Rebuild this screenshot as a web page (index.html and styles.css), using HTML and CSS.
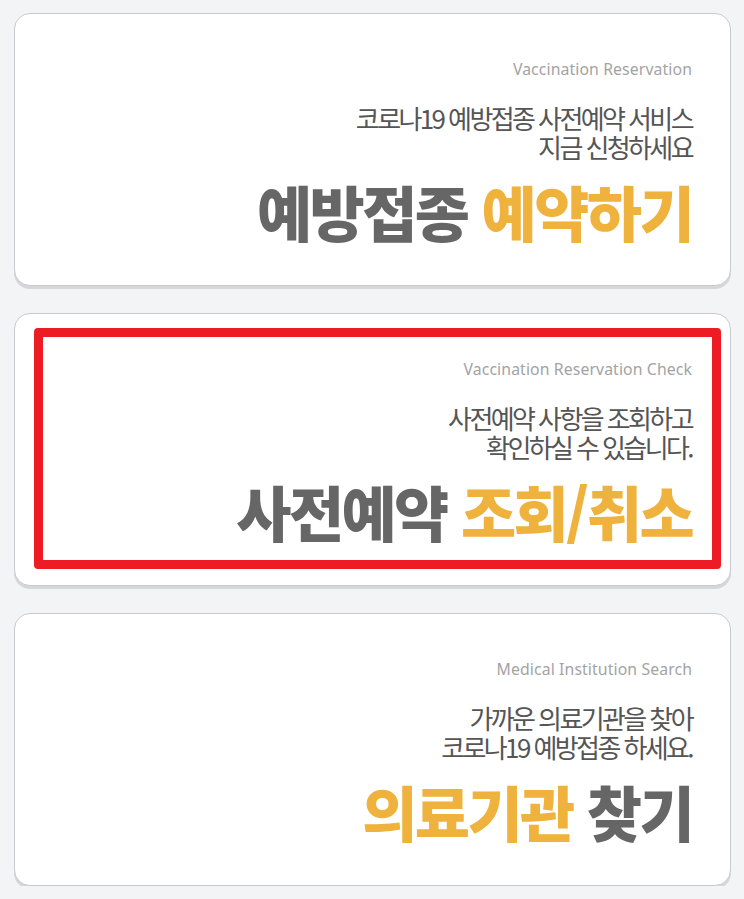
FILE: index.html
```html
<!DOCTYPE html>
<html lang="ko">
<head>
<meta charset="utf-8">
<title>코로나19 예방접종</title>
<link rel="stylesheet" href="styles.css">
</head>
<body>
<main class="list">
  <a class="card" href="#">
    <p class="eng">Vaccination Reservation</p>
    <p class="desc">코로나19 예방접종 사전예약 서비스<br>지금 신청하세요</p>
    <h2 class="title"><span class="grey">예방접종</span> <span class="yellow">예약하기</span></h2>
  </a>
  <a class="card selected" href="#">
    <p class="eng">Vaccination Reservation Check</p>
    <p class="desc">사전예약 사항을 조회하고<br>확인하실 수 있습니다.</p>
    <h2 class="title"><span class="grey">사전예약</span> <span class="yellow">조회/취소</span></h2>
    <span class="highlight"></span>
  </a>
  <a class="card" href="#">
    <p class="eng">Medical Institution Search</p>
    <p class="desc">가까운 의료기관을 찾아<br>코로나19 예방접종 하세요.</p>
    <h2 class="title"><span class="yellow">의료기관</span> <span class="grey">찾기</span></h2>
  </a>
</main>
</body>
</html>
```

FILE: styles.css
```css
html, body {
  margin: 0;
  padding: 0;
  background: #f3f4f6;
}
body {
  font-family: "Noto Sans CJK KR", "Noto Sans", sans-serif;
}
.list {
  display: flex;
  flex-direction: column;
  gap: 27px;
  padding: 13px 13px 0 14px;
}
.card {
  position: relative;
  display: flex;
  flex-direction: column;
  align-items: flex-end;
  box-sizing: border-box;
  height: 273px;
  padding: 45px 38px 0 20px;
  background: #fff;
  border: 1.5px solid #c9cacf;
  border-radius: 16px;
  box-shadow: 0 3px 0 #d6d7db;
  text-decoration: none;
  text-align: right;
}
.eng {
  margin: 0;
  font-family: "Noto Sans", sans-serif;
  font-size: 15.8px;
  line-height: 20px;
  color: #a3a3a3;
  letter-spacing: 0.1px;
}
.desc {
  margin: 24px 0 0;
  font-size: 26px;
  line-height: 29px;
  font-weight: 400;
  color: #555;
  letter-spacing: -2.6px;
}
.title {
  margin: 19px 0 0;
  font-size: 60px;
  line-height: 62px;
  font-weight: 900;
  letter-spacing: -2.6px;
}
.grey { color: #666; }
.yellow { color: #eeb23d; }
.highlight {
  position: absolute;
  left: 19px;
  top: 14px;
  right: 9px;
  bottom: 16px;
  border: 9px solid #ed1c24;
  border-radius: 4px;
  pointer-events: none;
}
```
